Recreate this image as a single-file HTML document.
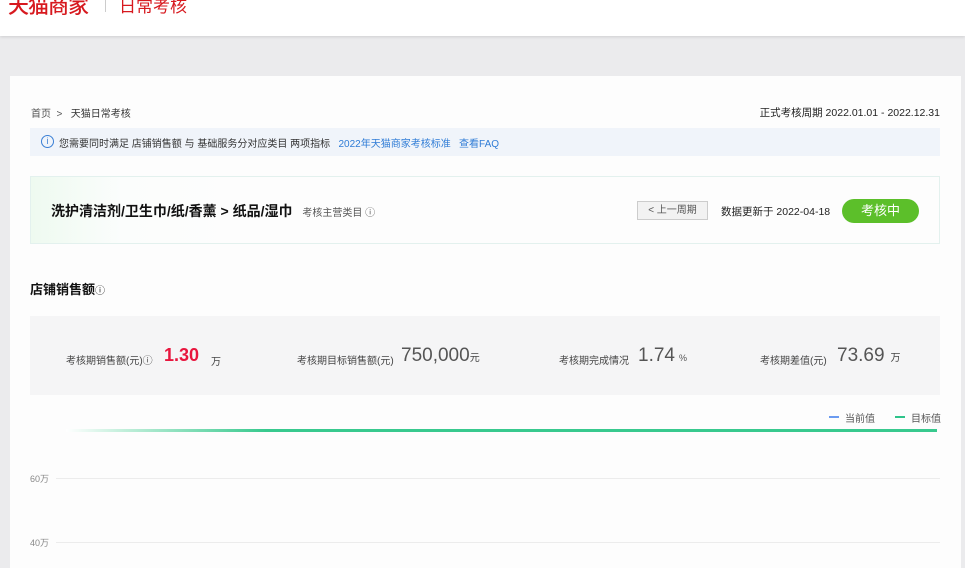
<!DOCTYPE html>
<html><head><meta charset="utf-8"><style>
*{margin:0;padding:0;box-sizing:border-box}
body{width:965px;height:568px;overflow:hidden;background:#ebebed;font-family:"Liberation Sans","Noto Sans CJK SC",sans-serif;position:relative;color:#333}
.a{position:absolute;white-space:nowrap}
</style></head><body>
<div class="a" style="left:0;top:0;width:965px;height:36px;background:#fff;box-shadow:0 1px 3px rgba(0,0,0,.12)"></div>
<div class="a" style="left:8px;top:-10px;font-size:21px;color:#d7191f;font-weight:500;letter-spacing:-1px">天猫商家</div>
<div class="a" style="left:105px;top:0;width:1px;height:12px;background:#ccc"></div>
<div class="a" style="left:119px;top:-8px;font-size:17px;color:#d7191f">日常考核</div>
<div class="a" style="left:10px;top:76px;width:951px;height:492px;background:#fdfdfd"></div>
<div class="a" style="left:31px;top:105px;font-size:10px;color:#555">首页 &nbsp;&gt;&nbsp;&nbsp; <span style="color:#333">天猫日常考核</span></div>
<div class="a" style="right:25px;top:105px;font-size:10.5px;color:#222">正式考核周期 2022.01.01 - 2022.12.31</div>
<div class="a" style="left:30px;top:128px;width:910px;height:28px;background:#f0f4fa"></div>
<div class="a" style="left:41px;top:135px;width:13px;height:13px;border:1px solid #3a7fd5;border-radius:50%;color:#3a7fd5;font-size:9px;text-align:center;line-height:11px">i</div>
<div class="a" style="left:59px;top:135px;font-size:10px;color:#333">您需要同时满足 店铺销售额 与 基础服务分对应类目 两项指标 &nbsp; <span style="color:#2f7cd6">2022年天猫商家考核标准 &nbsp; 查看FAQ</span></div>
<div class="a" style="left:30px;top:176px;width:910px;height:68px;border:1px solid #e3f1ee;background:linear-gradient(90deg,#eefaf0 0,#fbfdfc 90px,#fdfdfd 200px)"></div>
<div class="a" style="left:51px;top:201px;font-size:14px;color:#111;font-weight:bold">洗护清洁剂/卫生巾/纸/香薰 &gt; 纸品/湿巾 <span style="font-size:10px;color:#555;margin-left:6px;font-weight:normal">考核主营类目 ⓘ</span></div>
<div class="a" style="left:637px;top:201px;width:71px;height:19px;border:1px solid #ccc;background:#f2f2f2;font-size:10px;color:#555;text-align:center;line-height:17px">&lt; 上一周期</div>
<div class="a" style="left:721px;top:204px;font-size:10.5px;color:#222">数据更新于 2022-04-18</div>
<div class="a" style="left:842px;top:199px;width:77px;height:24px;border-radius:12px;background:#5cbf2a;color:#fff;font-size:13px;text-align:center;line-height:24px">考核中</div>
<div class="a" style="left:30px;top:279px;font-size:13px;color:#111;font-weight:bold">店铺销售额<span style="font-size:10px;font-weight:normal">ⓘ</span></div>
<div class="a" style="left:30px;top:316px;width:910px;height:79px;background:#f5f5f6"></div>
<div class="a" style="left:66px;top:352px;font-size:10px;color:#444">考核期销售额(元)ⓘ</div>
<div class="a" style="left:164px;top:345px;font-size:18px;font-weight:bold;color:#e8163e">1.30</div>
<div class="a" style="left:211px;top:353px;font-size:10px;color:#444">万</div>
<div class="a" style="left:297px;top:352px;font-size:10px;color:#444">考核期目标销售额(元)</div>
<div class="a" style="left:401px;top:345px;font-size:19px;color:#555">750,000<span style="font-size:10px;color:#444">元</span></div>
<div class="a" style="left:559px;top:352px;font-size:10px;color:#444">考核期完成情况</div>
<div class="a" style="left:638px;top:345px;font-size:19px;color:#555">1.74<span style="font-size:9px;margin-left:4px">%</span></div>
<div class="a" style="left:760px;top:352px;font-size:10px;color:#444">考核期差值(元)</div>
<div class="a" style="left:837px;top:345px;font-size:19px;color:#555">73.69<span style="font-size:10px;color:#444;margin-left:6px">万</span></div>
<div class="a" style="left:829px;top:416px;width:10px;height:2px;background:#6b9bf0"></div>
<div class="a" style="left:845px;top:410px;font-size:10px;color:#555">当前值</div>
<div class="a" style="left:895px;top:416px;width:10px;height:2px;background:#2ec48a"></div>
<div class="a" style="left:911px;top:410px;font-size:10px;color:#555">目标值</div>
<div class="a" style="left:66px;top:429px;width:871px;height:3px;background:linear-gradient(90deg,#fff 0,#bfeed9 60px,#38c98e 200px)"></div>
<div class="a" style="left:30px;top:472px;font-size:9px;color:#888">60万</div>
<div class="a" style="left:56px;top:478px;width:884px;height:1px;background:#ececec"></div>
<div class="a" style="left:30px;top:536px;font-size:9px;color:#888">40万</div>
<div class="a" style="left:56px;top:542px;width:884px;height:1px;background:#ececec"></div>
</body></html>
